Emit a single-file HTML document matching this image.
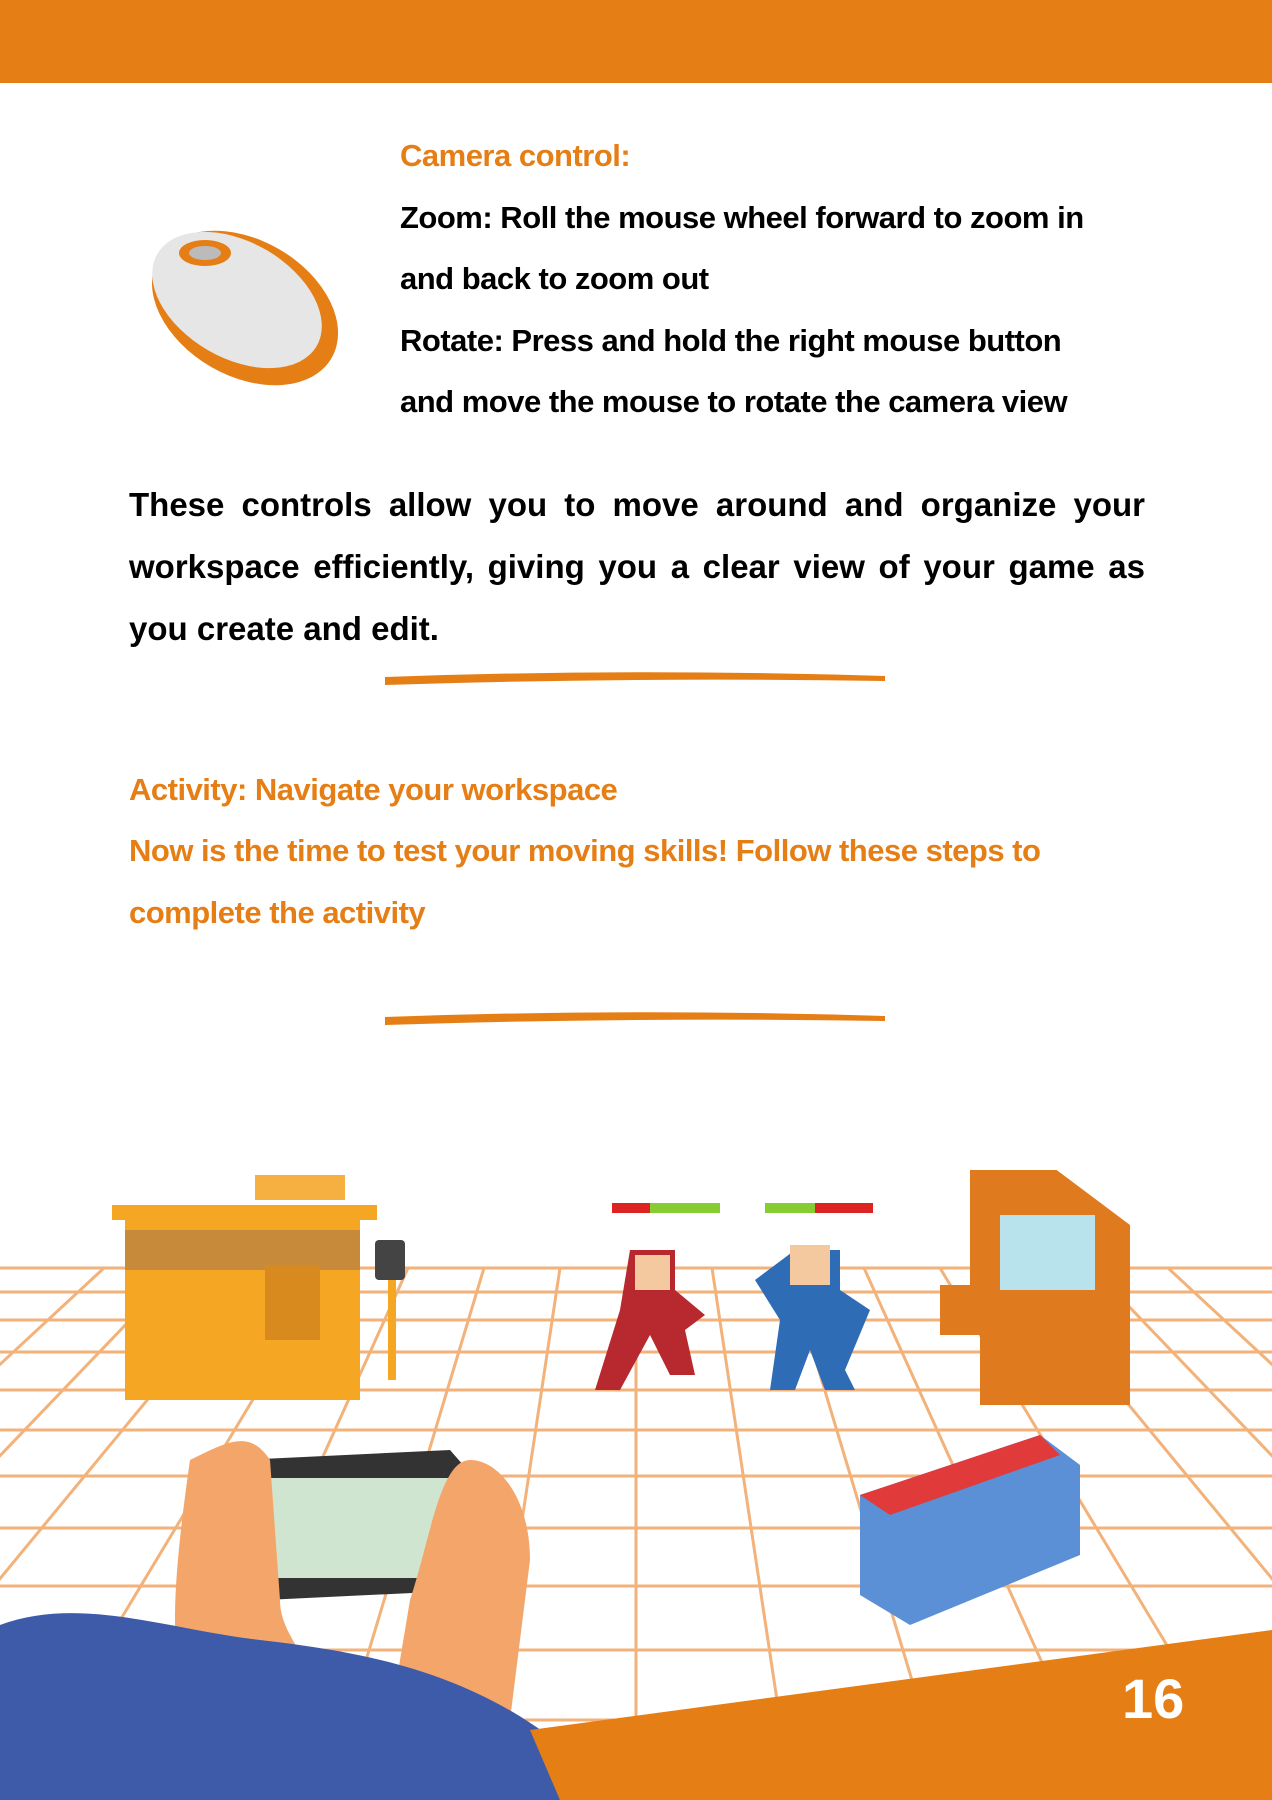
<!DOCTYPE html>
<html><head><meta charset="utf-8"><style>
*{margin:0;padding:0;box-sizing:border-box}
body{width:1272px;height:1800px;background:#fff;position:relative;overflow:hidden;font-family:"Liberation Sans",sans-serif;font-weight:bold}
.top{position:absolute;left:0;top:0;width:1272px;height:83px;background:#E67E16}
.t{position:absolute;font-size:31px;letter-spacing:-0.5px;white-space:nowrap}
.o{color:#E67E16}
.p{position:absolute;left:129px;width:1016px;font-size:33px;line-height:62px;text-align:justify;text-align-last:left;top:474px}
</style></head><body>
<div class="top"></div>
<svg style="position:absolute;left:145px;top:228px" width="215" height="175" viewBox="0 0 215 175">
<ellipse cx="100" cy="80" rx="100" ry="68" transform="rotate(30 100 80)" fill="#E67E16"/>
<ellipse cx="92" cy="72" rx="92" ry="58" transform="rotate(30 92 72)" fill="#e6e6e6"/>
<ellipse cx="60" cy="25" rx="26" ry="13" fill="#E67E16"/>
<ellipse cx="60" cy="25" rx="16" ry="7" fill="#bbb"/>
</svg>
<div class="t o" style="left:400px;top:138px">Camera control:</div>
<div class="t" style="left:400px;top:200px">Zoom: Roll the mouse wheel forward to zoom in</div>
<div class="t" style="left:400px;top:261px">and back to zoom out</div>
<div class="t" style="left:400px;top:323px">Rotate: Press and hold the right mouse button</div>
<div class="t" style="left:400px;top:384px">and move the mouse to rotate the camera view</div>
<div class="p">These controls allow you to move around and organize your workspace efficiently, giving you a clear view of your game as you create and edit.</div>
<svg style="position:absolute;left:380px;top:666px" width="510" height="24"><path d="M5 11 Q250 2 505 10 L505 15 Q250 11 5 19Z" fill="#E67E16"/></svg>
<div class="t o" style="left:129px;top:772px">Activity: Navigate your workspace</div>
<div class="t o" style="left:129px;top:833px">Now is the time to test your moving skills! Follow these steps to</div>
<div class="t o" style="left:129px;top:895px">complete the activity</div>
<svg style="position:absolute;left:380px;top:1006px" width="510" height="24"><path d="M5 11 Q250 2 505 10 L505 15 Q250 11 5 19Z" fill="#E67E16"/></svg>
<svg style="position:absolute;left:0;top:1170px" width="1272" height="630" viewBox="0 1170 1272 630">
<g stroke="#F2B27A" stroke-width="3" fill="none">
<line x1="0" y1="1268" x2="1272" y2="1268"/><line x1="0" y1="1292" x2="1272" y2="1292"/>
<line x1="0" y1="1320" x2="1272" y2="1320"/><line x1="0" y1="1352" x2="1272" y2="1352"/>
<line x1="0" y1="1390" x2="1272" y2="1390"/><line x1="0" y1="1430" x2="1272" y2="1430"/>
<line x1="0" y1="1476" x2="1272" y2="1476"/><line x1="0" y1="1528" x2="1272" y2="1528"/>
<line x1="0" y1="1586" x2="1272" y2="1586"/><line x1="0" y1="1650" x2="1272" y2="1650"/>
<line x1="0" y1="1720" x2="1272" y2="1720"/>
<line x1="636" y1="1268" x2="636" y2="1800"/>
<line x1="560" y1="1268" x2="480" y2="1800"/><line x1="712" y1="1268" x2="792" y2="1800"/>
<line x1="484" y1="1268" x2="324" y2="1800"/><line x1="788" y1="1268" x2="948" y2="1800"/>
<line x1="408" y1="1268" x2="168" y2="1800"/><line x1="864" y1="1268" x2="1104" y2="1800"/>
<line x1="332" y1="1268" x2="12" y2="1800"/><line x1="940" y1="1268" x2="1260" y2="1800"/>
<line x1="256" y1="1268" x2="-100" y2="1700"/><line x1="1016" y1="1268" x2="1372" y2="1700"/>
<line x1="180" y1="1268" x2="-100" y2="1560"/><line x1="1092" y1="1268" x2="1372" y2="1560"/>
<line x1="104" y1="1268" x2="-60" y2="1420"/><line x1="1168" y1="1268" x2="1332" y2="1420"/>
</g>
<rect x="255" y="1175" width="90" height="25" fill="#F5B041"/>
<rect x="112" y="1205" width="265" height="15" fill="#F5A623"/>
<rect x="125" y="1220" width="235" height="180" fill="#F5A623"/>
<rect x="125" y="1230" width="235" height="40" fill="#C78A3A"/>
<rect x="265" y="1265" width="55" height="75" fill="#D98A1E"/>
<rect x="375" y="1240" width="30" height="40" rx="4" fill="#444"/>
<rect x="388" y="1280" width="8" height="100" fill="#F5A623"/>
<rect x="612" y="1203" width="108" height="10" fill="#d22"/><rect x="650" y="1203" width="70" height="10" fill="#8c3"/>
<rect x="765" y="1203" width="108" height="10" fill="#8c3"/><rect x="815" y="1203" width="58" height="10" fill="#d22"/>
<path d="M630 1250h45v40l30 25-20 15 10 45h-25l-20-40-30 55h-25l25-80z" fill="#B8282F"/>
<rect x="635" y="1255" width="35" height="35" fill="#F4C9A0"/>
<path d="M795 1250h45v40l30 20-25 60 10 20h-30l-15-40-15 40h-25l10-70-25-40z" fill="#2E6CB5"/>
<rect x="790" y="1245" width="40" height="40" fill="#F4C9A0"/>
<path d="M970 1165h80l80 60v180h-150v-70h-40v-50h30z" fill="#E07A1E"/>
<rect x="1000" y="1215" width="95" height="75" fill="#B9E3EC"/>
<path d="M860 1495l180-60 40 30v90l-170 70-50-30z" fill="#5B8FD6"/>
<path d="M860 1495l180-60 20 20-170 60z" fill="#E03A3A"/>
<path d="M240 1460l210-10 35 40-10 100-210 10z" fill="#333"/>
<rect x="255" y="1478" width="220" height="100" fill="#CFE5D0"/>
<path d="M190 1460c40-20 60-30 80 0l10 140c0 40 40 60 40 120l-130 0c-20-60-20-120 0-260z" fill="#F4A66A"/>
<path d="M470 1460c30 0 60 40 60 100l-20 160h-120l20-120c20-60 30-140 60-140z" fill="#F4A66A"/>
<path d="M0 1625c80-30 170 5 260 15 130 15 250 40 360 160H0z" fill="#3E5BA9"/>
<path d="M530 1730L1272 1630V1800H560z" fill="#E67E16"/>
<text x="1122" y="1718" fill="#fff" font-family="Liberation Sans" font-weight="bold" font-size="56">16</text>
</svg>
</body></html>
